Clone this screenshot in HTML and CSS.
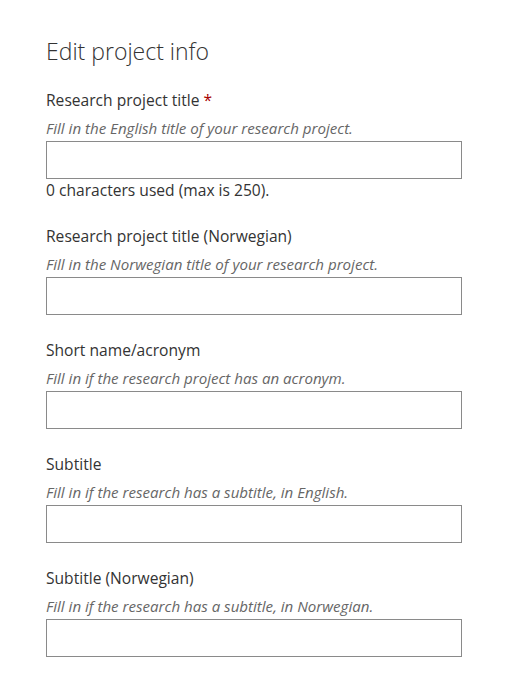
FILE: index.html
```html
<!DOCTYPE html>
<html lang="en">
<head>
<meta charset="utf-8">
<title>Edit project info</title>
<link rel="stylesheet" href="styles.css">
</head>
<body>
<main class="page">
  <h1 class="title">Edit project info</h1>
  <div class="field">
    <label class="label" for="f1">Research project title <span class="req">*</span></label>
    <div class="hint">Fill in the English title of your research project.</div>
    <input class="input" id="f1" type="text">
    <div class="counter">0 characters used (max is 250).</div>
  </div>
  <div class="field">
    <label class="label" for="f2">Research project title (Norwegian)</label>
    <div class="hint">Fill in the Norwegian title of your research project.</div>
    <input class="input" id="f2" type="text">
  </div>
  <div class="field">
    <label class="label" for="f3">Short name/acronym</label>
    <div class="hint">Fill in if the research project has an acronym.</div>
    <input class="input" id="f3" type="text">
  </div>
  <div class="field">
    <label class="label" for="f4">Subtitle</label>
    <div class="hint">Fill in if the research has a subtitle, in English.</div>
    <input class="input" id="f4" type="text">
  </div>
  <div class="field">
    <label class="label" for="f5">Subtitle (Norwegian)</label>
    <div class="hint">Fill in if the research has a subtitle, in Norwegian.</div>
    <input class="input" id="f5" type="text">
  </div>
</main>
</body>
</html>
```

FILE: styles.css
```css
html, body {
  margin: 0;
  padding: 0;
  background: #ffffff;
}
body {
  font-family: "Open Sans", "Noto Sans", sans-serif;
  color: #333333;
}
.page {
  padding: 36px 45px 0 46px;
  width: 416px;
}
.title {
  margin: 0 0 24px 0;
  font-size: 23px;
  line-height: 30px;
  font-weight: 300;
  color: #333333;
}
.field {
  display: flex;
  flex-direction: column;
  margin-bottom: 25px;
}
.label {
  font-size: 15.6px;
  line-height: 20px;
  color: #333333;
}
.req {
  color: #a80000;
}
.hint {
  margin-top: 8px;
  font-size: 15.1px;
  line-height: 20px;
  font-style: italic;
  color: #666666;
}
.input {
  margin: 3px 0 0 0;
  box-sizing: border-box;
  width: 416px;
  height: 38px;
  border: 1px solid #8a8a8a;
  border-radius: 0;
  padding: 0 8px;
  background: #fff;
  font: inherit;
}
.counter {
  font-size: 15.6px;
  line-height: 22px;
  color: #333333;
}
```
